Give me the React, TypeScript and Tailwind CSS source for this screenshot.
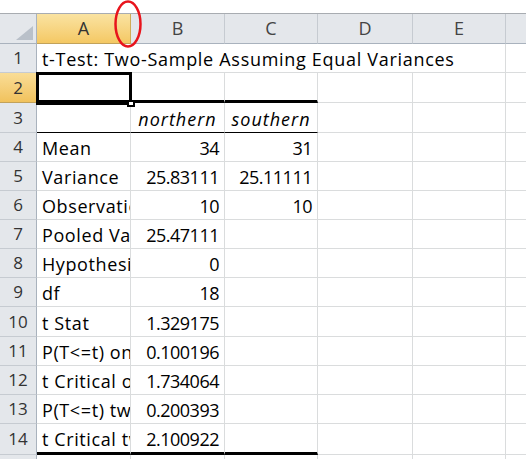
import clsx from "clsx";

const COLS = ["A", "B", "C", "D", "E"];
const COL_W = ["w-[94px]", "w-[94px]", "w-[93px]", "w-[95px]", "w-[93px]"];

// row number -> height in px (includes bottom border)
const ROW_H: Record<number, string> = {
  1: "h-[29px]",
  2: "h-[30px]",
  3: "h-[30px]",
  4: "h-[29px]",
  5: "h-[29px]",
  6: "h-[29px]",
  7: "h-[29px]",
  8: "h-[29px]",
  9: "h-[29px]",
  10: "h-[30px]",
  11: "h-[29px]",
  12: "h-[29px]",
  13: "h-[29px]",
  14: "h-[31px]",
};

const stats: [string, string, string][] = [
  ["Mean", "34", "31"],
  ["Variance", "25.83111", "25.11111"],
  ["Observations", "10", "10"],
  ["Pooled Variance", "25.47111", ""],
  ["Hypothesized Mean Difference", "0", ""],
  ["df", "18", ""],
  ["t Stat", "1.329175", ""],
  ["P(T<=t) one-tail", "0.100196", ""],
  ["t Critical one-tail", "1.734064", ""],
  ["P(T<=t) two-tail", "0.200393", ""],
  ["t Critical two-tail", "2.100922", ""],
];

const cellBase =
  "box-border shrink-0 border-r border-[#dadcdd] overflow-hidden whitespace-nowrap px-[5px] flex items-end pb-[2px] text-[18px] leading-[22px] text-black";

const RowHeader = ({ n, selected }: { n: number; selected?: boolean }) => (
  <div
    className={clsx(
      "box-border w-[37px] shrink-0 flex items-center justify-center border-r border-b text-[17px] text-[#333]",
      selected
        ? "bg-gradient-to-b from-[#f9dd96] to-[#f1c25c] border-b-[#c2a25a] border-r-[#c2a25a]"
        : "bg-[#e4e7eb] border-b-[#c6cbd1] border-r-[#a9b2bd]"
    )}
  >
    {n}
  </div>
);

const Cell = ({
  children,
  w,
  align = "left",
  bottom = "grid",
  italic,
}: {
  children?: React.ReactNode;
  w: string;
  align?: "left" | "right" | "center";
  bottom?: "grid" | "thin" | "thick";
  italic?: boolean;
}) => (
  <div
    className={clsx(
      cellBase,
      w,
      align === "left" && "tracking-[0.6px]",
      align === "right" && "justify-end tracking-[-0.5px]",
      align === "center" && "justify-center",
      bottom === "grid" && "border-b border-b-[#dadcdd]",
      bottom === "thin" && "border-b border-b-black",
      bottom === "thick" && "border-b-[3px] border-b-black",
      italic && "italic tracking-[1px]"
    )}
  >
    {children}
  </div>
);

export default function App() {
  return (
    <div
      className="relative w-[526px] h-[459px] overflow-hidden bg-white"
      style={{ fontFamily: "'Open Sans', 'Liberation Sans', sans-serif" }}
    >
      {/* strip above the headers */}
      <div className="h-[14px] border-b border-[#a8acb1] box-border" />

      {/* column headers */}
      <div className="flex h-[30px]">
        <div className="box-border w-[37px] shrink-0 bg-[#e4e7eb] border-r border-b border-[#a9b2bd] flex items-end justify-end p-[3px]">
          <svg width="17" height="14" viewBox="0 0 17 14">
            <polygon points="17,0 17,14 0,14" fill="#b9c0c9" />
          </svg>
        </div>
        {COLS.map((c, i) => (
          <div
            key={c}
            className={clsx(
              "box-border shrink-0 flex items-center justify-center border-r border-b text-[18px]",
              COL_W[i],
              c === "A"
                ? "bg-gradient-to-b from-[#fae3a1] to-[#f4c863] border-r-[#d0ab55] border-b-[#c2a25a] text-[#333]"
                : "bg-[#e4e7eb] border-r-[#c6cbd1] border-b-[#a9b2bd] text-[#444]"
            )}
          >
            {c}
          </div>
        ))}
        <div className="box-border flex-1 bg-[#e4e7eb] border-b border-[#a9b2bd]" />
      </div>

      {/* row 1: title overflowing across A..E */}
      <div className={clsx("flex", ROW_H[1])}>
        <RowHeader n={1} />
        <div className={clsx(cellBase, "w-[469px] tracking-[0.7px] border-b border-b-[#dadcdd]")}>
          t-Test: Two-Sample Assuming Equal Variances
        </div>
        <div className="flex-1 border-b border-[#dadcdd]" />
      </div>

      {/* row 2 */}
      <div className={clsx("flex", ROW_H[2])}>
        <RowHeader n={2} selected />
        <Cell w={COL_W[0]} bottom="thick" />
        <Cell w={COL_W[1]} bottom="thick" />
        <Cell w={COL_W[2]} bottom="thick" />
        <Cell w={COL_W[3]} />
        <Cell w={COL_W[4]} />
        <div className="flex-1 border-b border-[#dadcdd]" />
      </div>

      {/* row 3: column labels */}
      <div className={clsx("flex", ROW_H[3])}>
        <RowHeader n={3} />
        <Cell w={COL_W[0]} bottom="thin" />
        <Cell w={COL_W[1]} bottom="thin" align="center" italic>
          northern
        </Cell>
        <Cell w={COL_W[2]} bottom="thin" align="center" italic>
          southern
        </Cell>
        <Cell w={COL_W[3]} />
        <Cell w={COL_W[4]} />
        <div className="flex-1 border-b border-[#dadcdd]" />
      </div>

      {stats.map(([label, b, c], i) => {
        const n = i + 4;
        const last = n === 14;
        return (
          <div key={n} className={clsx("flex", ROW_H[n])}>
            <RowHeader n={n} />
            <Cell w={COL_W[0]} bottom={last ? "thick" : "grid"}>
              {label}
            </Cell>
            <Cell w={COL_W[1]} bottom={last ? "thick" : "grid"} align="right">
              {b}
            </Cell>
            <Cell w={COL_W[2]} bottom={last ? "thick" : "grid"} align="right">
              {c}
            </Cell>
            <Cell w={COL_W[3]} />
            <Cell w={COL_W[4]} />
            <div className="flex-1 border-b border-[#dadcdd]" />
          </div>
        );
      })}

      {/* row 15, cut off */}
      <div className="flex h-[10px]">
        <div className="w-[37px] shrink-0 bg-[#e4e7eb] border-r border-[#a9b2bd] box-border" />
        {COL_W.map((w, i) => (
          <div key={i} className={clsx("box-border shrink-0 border-r border-[#dadcdd]", w)} />
        ))}
      </div>

      {/* active cell A2 */}
      <div className="absolute left-[36px] top-[72px] w-[96px] h-[33px] border-[3px] border-black box-border pointer-events-none" />
      <div className="absolute left-[127px] top-[100px] w-[8px] h-[7px] bg-white border-2 border-black box-border" />

      {/* red annotation ring */}
      <svg className="absolute left-[113px] top-0" width="30" height="49" viewBox="0 0 30 49">
        <ellipse cx="15" cy="24" rx="12.5" ry="22.5" fill="none" stroke="#e8141c" strokeWidth="2.5" />
      </svg>
    </div>
  );
}
